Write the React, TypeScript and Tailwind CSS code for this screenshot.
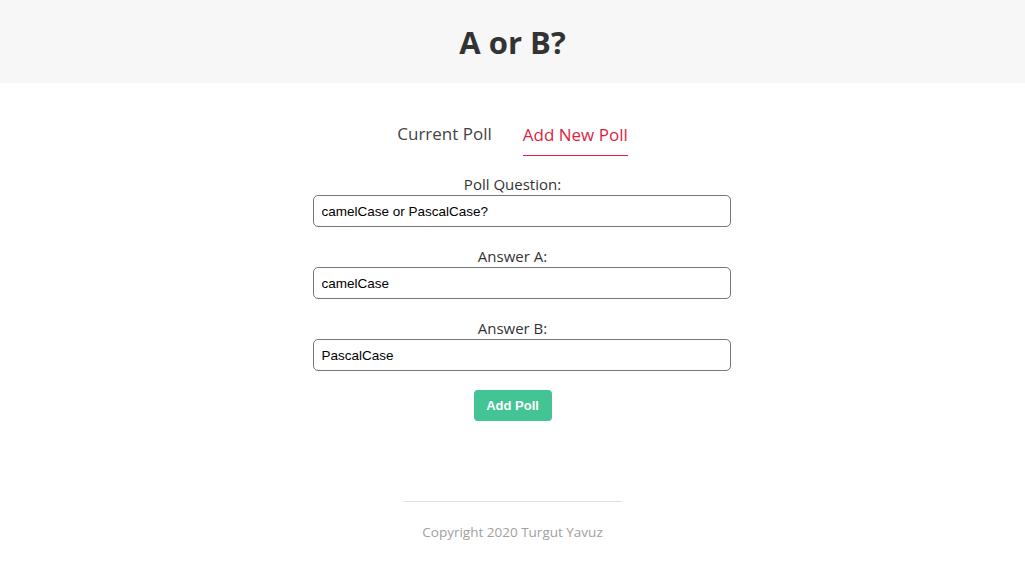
export default function App() {
  return (
    <main className="min-h-screen bg-white font-['Open_Sans',sans-serif] text-[#333]">
      <header className="h-[83px] bg-[#f7f7f7] flex items-center justify-center">
        <h1 className="text-[31px] font-bold leading-none text-[#333] pt-[2px]">A or B?</h1>
      </header>

      <nav className="flex justify-center gap-[31px] mt-[39px]">
        <button className="text-[17px] leading-[24px] text-[#444] pb-[8px] border-b-2 border-transparent">
          Current Poll
        </button>
        <button className="text-[17px] leading-[24px] text-[#dc1f45] pb-[8px] border-b border-[#dc1f45]">
          Add New Poll
        </button>
      </nav>

      <form className="flex flex-col items-center mt-[18px]">
        {[
          ["Poll Question:", "camelCase or PascalCase?"],
          ["Answer A:", "camelCase"],
          ["Answer B:", "PascalCase"],
        ].map(([label, value], i) => (
          <div key={label} className={"flex flex-col items-center " + (i > 0 ? "mt-[19px]" : "")}>
            <label className="text-[15px] leading-[21px] text-[#333]">{label}</label>
            <input
              defaultValue={value}
              className="ml-[18px] w-[418px] h-[32px] border border-[#767676] rounded-[5px] px-[8px] font-['Liberation_Sans',Arial,sans-serif] text-[13.5px] text-black outline-none"
            />
          </div>
        ))}
        <button
          type="button"
          className="mt-[19px] w-[78px] h-[31px] rounded-[4px] bg-[#42c495] text-white font-bold font-['Liberation_Sans',Arial,sans-serif] text-[13px]"
        >
          Add Poll
        </button>
      </form>

      <footer className="flex flex-col items-center mt-[80px]">
        <div className="w-[218px] border-t border-[#e0e0e0]" />
        <p className="mt-[20px] text-[13.5px] text-[#a0a0a0]">Copyright 2020 Turgut Yavuz</p>
      </footer>
    </main>
  );
}
